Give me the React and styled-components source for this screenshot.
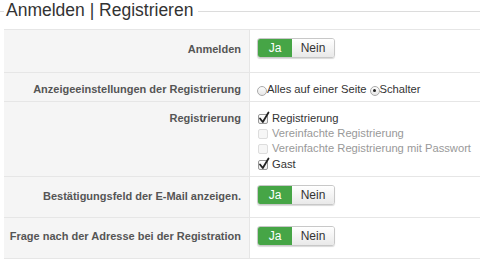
import React from "react";
import styled, { createGlobalStyle } from "styled-components";

const Global = createGlobalStyle`
  html, body { margin: 0; padding: 0; background: #fff; }
  body { font-family: "Liberation Sans", Arial, sans-serif; color: #333; }
`;

const Section = styled.section`
  width: 480px;
`;

const Header = styled.div`
  display: flex;
  align-items: center;
  height: 21px;
  &::before, &::after {
    content: "";
    height: 1px;
    background: #dcdcdc;
    margin-top: 1px;
  }
  &::before { width: 4px; }
  &::after { flex: 1; }
`;

const Title = styled.h2`
  margin: 0;
  padding: 0 5px 0 2px;
  font-size: 17.5px;
  font-weight: normal;
  color: #333;
  line-height: 21px;
  white-space: nowrap;
`;

const Table = styled.div`
  display: grid;
  grid-template-columns: 246px 1fr;
  margin: 8px 0 0 4px;
  border-top: 1px solid #e6e6e6;
`;

const Label = styled.div`
  background: #f5f5f5;
  border-bottom: 1px solid #e6e6e6;
  border-right: 1px solid #e6e6e6;
  height: ${(p) => p.h}px;
  padding: ${(p) => p.pt}px 8px 0 0;
  box-sizing: border-box;
  text-align: right;
  font-weight: bold;
  font-size: 11px;
  color: #555;
  white-space: nowrap;
`;

const Value = styled.div`
  border-bottom: 1px solid #e6e6e6;
  height: ${(p) => p.h}px;
  padding: ${(p) => p.pt}px 0 0 7px;
  box-sizing: border-box;
  font-size: 11.2px;
  color: #333;
  white-space: nowrap;
`;

const Toggle = styled.div`
  display: inline-flex;
  height: 20px;
  border-radius: 3px;
  box-shadow: 0 1px 1px rgba(0,0,0,0.15);
  overflow: hidden;
  border: 1px solid #c8c8c8;
  box-sizing: border-box;
`;

const ToggleBtn = styled.span`
  display: flex;
  align-items: center;
  justify-content: center;
  width: ${(p) => p.w}px;
  font-size: 12px;
  color: ${(p) => (p.active ? "#fff" : "#333")};
  background: ${(p) => (p.active ? "#46a546" : "linear-gradient(#fff, #e9e9e9)")};
`;

const RadioRow = styled.div`
  display: flex;
  align-items: center;
  height: 18px;
`;

const Radio = styled.span`
  width: 10px;
  height: 10px;
  border-radius: 50%;
  border: 1px solid #aaa;
  background: linear-gradient(#fdfdfd, #e6e6e6);
  box-sizing: border-box;
  margin-top: 3px;
  display: flex;
  align-items: center;
  justify-content: center;
  &::after {
    content: "";
    width: 3px;
    height: 3px;
    border-radius: 50%;
    background: ${(p) => (p.checked ? "#222" : "transparent")};
  }
`;

const RadioText = styled.span`
  margin-right: 3px;
`;

const CheckList = styled.div`
  display: flex;
  flex-direction: column;
`;

const CheckRow = styled.div`
  display: flex;
  align-items: center;
  height: 15.3px;
  color: ${(p) => (p.disabled ? "#999" : "#333")};
`;

const Box = styled.span`
  position: relative;
  width: 10px;
  height: 10px;
  border: 1px solid ${(p) => (p.disabled ? "#ddd" : "#999")};
  border-radius: 2px;
  background: ${(p) => (p.disabled ? "#f6f6f6" : "linear-gradient(#fff, #eee)")};
  box-sizing: border-box;
  margin: 2px 4px 0 1px;
  flex: none;
`;

const Tick = styled.svg`
  position: absolute;
  left: -1px;
  top: -4px;
`;

function Check({ checked, disabled, children }) {
  return (
    <CheckRow disabled={disabled}>
      <Box disabled={disabled}>
        {checked && (
          <Tick width="12" height="13" viewBox="0 0 12 13">
            <path d="M2 7.5 L4.8 11 L10.5 1.5" fill="none" stroke="#222" strokeWidth="1.8" strokeLinecap="round" strokeLinejoin="round" />
          </Tick>
        )}
      </Box>
      {children}
    </CheckRow>
  );
}

function YesNo() {
  return (
    <Toggle>
      <ToggleBtn active w={34}>Ja</ToggleBtn>
      <ToggleBtn w={42}>Nein</ToggleBtn>
    </Toggle>
  );
}

export default function App() {
  return (
    <>
      <Global />
      <Section>
        <Header>
          <Title>Anmelden | Registrieren</Title>
        </Header>
        <Table>
          <Label h={43} pt={13}>Anmelden</Label>
          <Value h={43} pt={8}><YesNo /></Value>

          <Label h={29} pt={10}>Anzeigeeinstellungen der Registrierung</Label>
          <Value h={29} pt={7}>
            <RadioRow>
              <Radio />
              <RadioText>Alles auf einer Seite</RadioText>
              <Radio checked />
              <RadioText>Schalter</RadioText>
            </RadioRow>
          </Value>

          <Label h={75} pt={10}>Registrierung</Label>
          <Value h={75} pt={8}>
            <CheckList>
              <Check checked>Registrierung</Check>
              <Check disabled>Vereinfachte Registrierung</Check>
              <Check disabled>Vereinfachte Registrierung mit Passwort</Check>
              <Check checked>Gast</Check>
            </CheckList>
          </Value>

          <Label h={41} pt={13}>Bestätigungsfeld der E-Mail anzeigen.</Label>
          <Value h={41} pt={8}><YesNo /></Value>

          <Label h={41} pt={12}>Frage nach der Adresse bei der Registration</Label>
          <Value h={41} pt={8}><YesNo /></Value>
        </Table>
      </Section>
    </>
  );
}
